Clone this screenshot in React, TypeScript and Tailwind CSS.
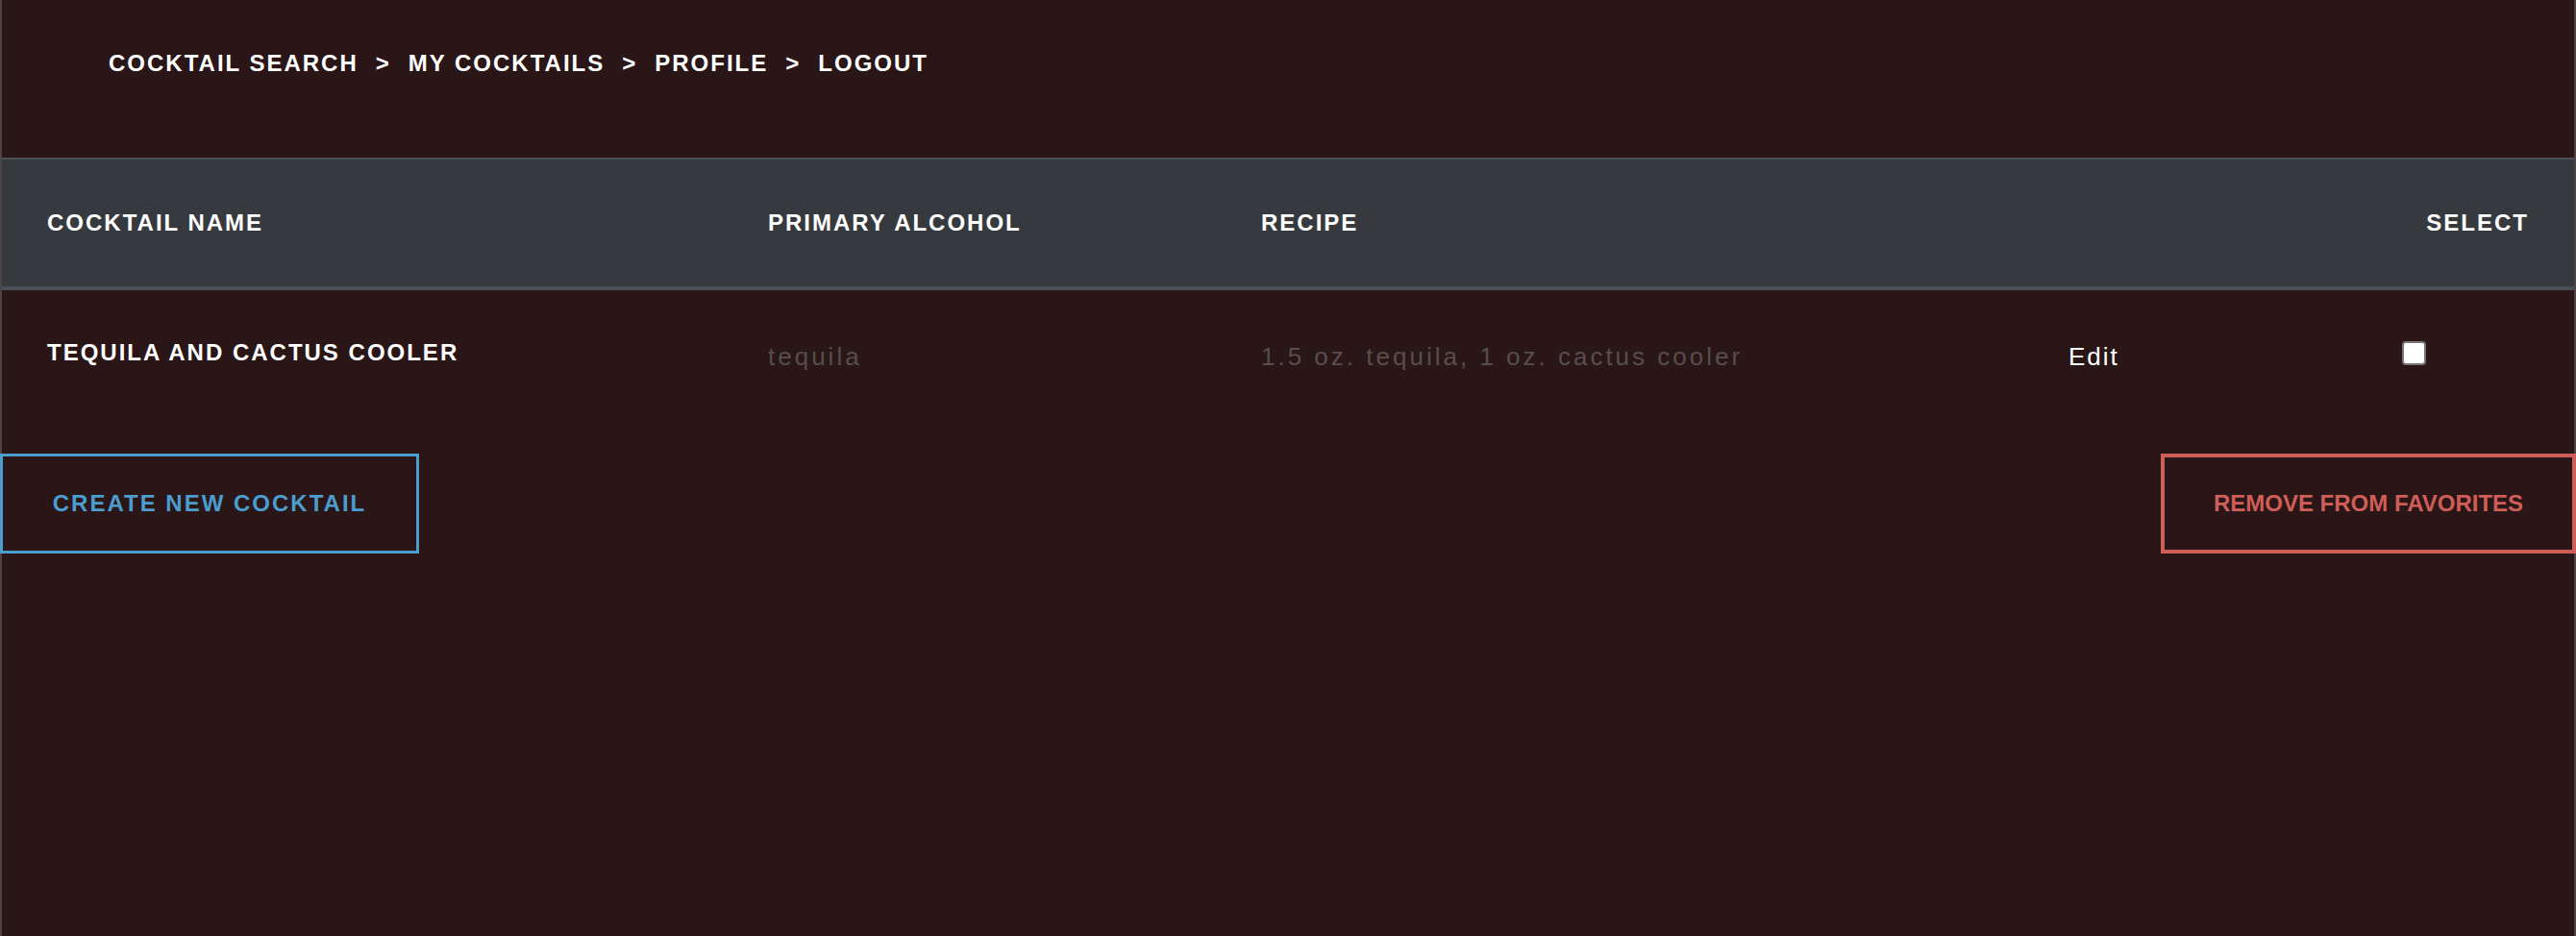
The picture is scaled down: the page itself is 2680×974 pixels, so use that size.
import React from "react";

type Cocktail = {
    id: number;
    name: string;
    alcohol: string;
    recipe: string;
};

const navLinks = ["COCKTAIL SEARCH", "MY COCKTAILS", "PROFILE", "LOGOUT"];

const cocktails: Cocktail[] = [
    {
        id: 1,
        name: "TEQUILA AND CACTUS COOLER",
        alcohol: "tequila",
        recipe: "1.5 oz. tequila, 1 oz. cactus cooler",
    },
];

const font = { fontFamily: '"Liberation Sans", Arial, Helvetica, sans-serif' };

export default function App() {
    return (
        <main
            className="min-h-screen w-full bg-[#2a1616] border-x-2 border-[#4f4445] text-white"
            style={font}
        >
            {/* Breadcrumb nav */}
            <nav className="h-[164px] pt-[52px] pl-[111px]">
                <ul className="flex items-center gap-[18px] text-[24px] leading-[28px] font-bold tracking-[2px]">
                    {navLinks.map((link, i) => (
                        <React.Fragment key={link}>
                            {i > 0 && <li aria-hidden>&gt;</li>}
                            <li className="cursor-pointer">{link}</li>
                        </React.Fragment>
                    ))}
                </ul>
            </nav>

            {/* Table */}
            <section>
                <div className="grid grid-cols-[750px_513px_840px_1fr_132px] items-center h-[138px] px-[47px] bg-[#363a3e] border-t-2 border-b-4 border-[#4a5057] text-[24px] leading-[28px] font-bold tracking-[2px]">
                    <div>COCKTAIL NAME</div>
                    <div>PRIMARY ALCOHOL</div>
                    <div>RECIPE</div>
                    <div />
                    <div className="text-right">SELECT</div>
                </div>
                {cocktails.map((c) => (
                    <div
                        key={c.id}
                        className="grid grid-cols-[750px_513px_840px_1fr_132px] items-center h-[130px] px-[47px]"
                    >
                        <div className="text-[24px] leading-[28px] font-bold tracking-[2px]">{c.name}</div>
                        <div className="pt-[8px] text-[26px] leading-[30px] tracking-[3px] text-[#564e4e]">{c.alcohol}</div>
                        <div className="pt-[8px] text-[26px] leading-[30px] tracking-[3px] text-[#564e4e]">{c.recipe}</div>
                        <div className="pt-[8px] text-[26px] leading-[30px] tracking-[2px] text-white cursor-pointer">Edit</div>
                        <div className="flex">
                            <input
                                type="checkbox"
                                className="appearance-none w-[25px] h-[25px] m-0 bg-white border-2 border-[#767676] rounded-[4px] cursor-pointer"
                            />
                        </div>
                    </div>
                ))}
            </section>

            {/* Actions */}
            <div className="flex justify-between mt-[40px] -mx-[2px]">
                <button className="w-[436px] h-[104px] border-[3px] border-[#4b9dcf] text-[#4b9dcf] text-[24px] font-bold tracking-[2px] bg-transparent">
                    CREATE NEW COCKTAIL
                </button>
                <button className="w-[432px] h-[104px] border-[4px] border-[#cf5e58] text-[#cf5e58] text-[24px] font-bold bg-transparent">
                    REMOVE FROM FAVORITES
                </button>
            </div>
        </main>
    );
}
